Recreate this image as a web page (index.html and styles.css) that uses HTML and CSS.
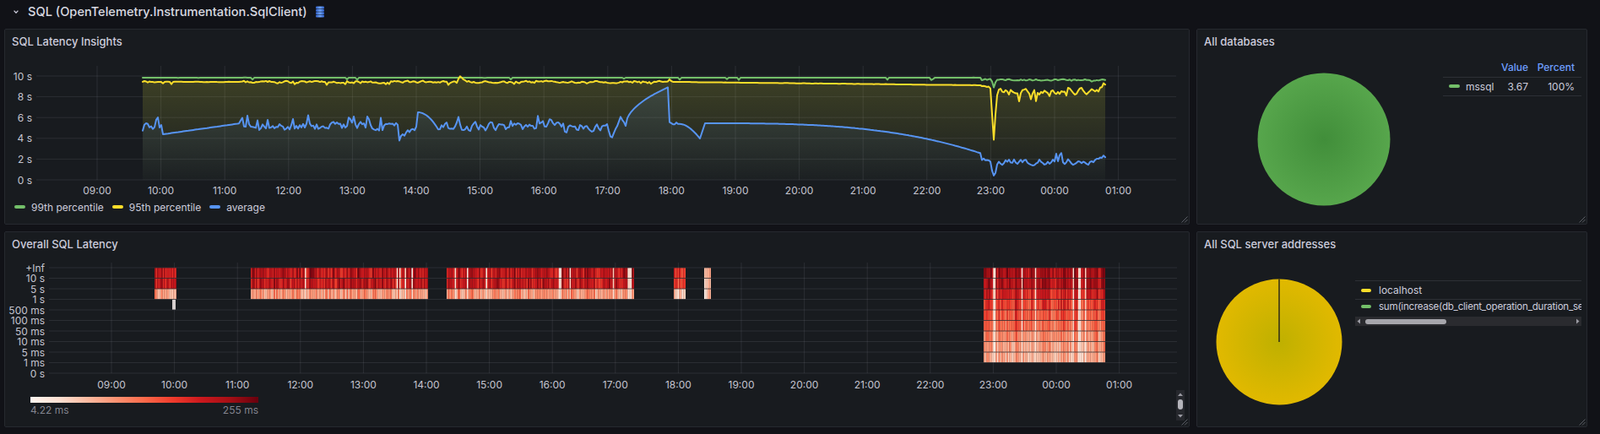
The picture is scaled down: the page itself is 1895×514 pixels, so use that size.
FILE: index.html
```html
<!DOCTYPE html>
<html lang="en">
<head>
<meta charset="utf-8">
<title>SQL (OpenTelemetry.Instrumentation.SqlClient)</title>
<link rel="stylesheet" href="styles.css">
</head>
<body>
<div class="row-header">
  <svg class="row-chevron" width="6" height="4" viewBox="0 0 6 4"><path d="M0.6 0.6 L3 3.2 L5.4 0.6"/></svg>
  <span class="row-title">SQL (OpenTelemetry.Instrumentation.SqlClient)</span>
  <svg class="row-icon" width="10" height="14" viewBox="0 0 10 14">
    <defs>
      <linearGradient id="dbg" x1="0" y1="0" x2="1" y2="0">
        <stop offset="0" stop-color="#2f5fc8"/>
        <stop offset="0.5" stop-color="#6ea3f7"/>
        <stop offset="1" stop-color="#2f5fc8"/>
      </linearGradient>
    </defs>
    <rect x="0" y="0.6" width="10" height="2.9" rx="1" fill="url(#dbg)"/>
    <rect x="0" y="3.9" width="10" height="2.9" rx="1" fill="url(#dbg)"/>
    <rect x="0" y="7.2" width="10" height="2.9" rx="1" fill="url(#dbg)"/>
    <rect x="0" y="10.5" width="10" height="2.9" rx="1" fill="url(#dbg)"/>
  </svg>
</div>

<main class="grid">
  <section class="panel">
    <header class="panel-header"><h2 class="panel-title">SQL Latency Insights</h2></header>
    <div class="panel-body">
      <svg id="latency" class="chart" width="1402" height="172" viewBox="6 63 1402 172">
        <defs>
          <linearGradient id="fill-green" gradientUnits="userSpaceOnUse" x1="0" y1="90" x2="0" y2="213">
            <stop offset="0" stop-color="#73bf69" stop-opacity="0.07"/>
            <stop offset="1" stop-color="#73bf69" stop-opacity="0.01"/>
          </linearGradient>
          <linearGradient id="fill-yellow" gradientUnits="userSpaceOnUse" x1="0" y1="90" x2="0" y2="213">
            <stop offset="0" stop-color="#fade2a" stop-opacity="0.14"/>
            <stop offset="1" stop-color="#fade2a" stop-opacity="0.01"/>
          </linearGradient>
          <linearGradient id="fill-blue" gradientUnits="userSpaceOnUse" x1="0" y1="90" x2="0" y2="213">
            <stop offset="0" stop-color="#5794f2" stop-opacity="0.14"/>
            <stop offset="1" stop-color="#5794f2" stop-opacity="0.01"/>
          </linearGradient>
        </defs>
        <path class="grid-line" d="M43 90H1393M43 114.6H1393M43 139.2H1393M43 163.8H1393M43 188.4H1393M43 213H1393M115 78V213M190.6 78V213M266.2 78V213M341.8 78V213M417.4 78V213M493 78V213M568.6 78V213M644.2 78V213M719.8 78V213M795.4 78V213M871 78V213M946.6 78V213M1022.2 78V213M1097.8 78V213M1173.4 78V213M1249 78V213M1324.6 78V213"/>
        <g id="latency-fills"></g>
        <g id="latency-lines"></g>
        <g class="axis-y">
          <text x="38" y="90">10 s</text>
          <text x="38" y="114.6">8 s</text>
          <text x="38" y="139.2">6 s</text>
          <text x="38" y="163.8">4 s</text>
          <text x="38" y="188.4">2 s</text>
          <text x="38" y="213">0 s</text>
        </g>
        <g class="axis-x">
          <text x="115" y="225">09:00</text>
          <text x="190.6" y="225">10:00</text>
          <text x="266.2" y="225">11:00</text>
          <text x="341.8" y="225">12:00</text>
          <text x="417.4" y="225">13:00</text>
          <text x="493" y="225">14:00</text>
          <text x="568.6" y="225">15:00</text>
          <text x="644.2" y="225">16:00</text>
          <text x="719.8" y="225">17:00</text>
          <text x="795.4" y="225">18:00</text>
          <text x="871" y="225">19:00</text>
          <text x="946.6" y="225">20:00</text>
          <text x="1022.2" y="225">21:00</text>
          <text x="1097.8" y="225">22:00</text>
          <text x="1173.4" y="225">23:00</text>
          <text x="1249" y="225">00:00</text>
          <text x="1324.6" y="225">01:00</text>
        </g>
      </svg>
      <div class="legend">
        <span class="legend-item"><span class="dash green"></span>99th percentile</span>
        <span class="legend-item"><span class="dash yellow"></span>95th percentile</span>
        <span class="legend-item"><span class="dash blue"></span>average</span>
      </div>
    </div>
    <svg class="resize" width="9" height="9" viewBox="0 0 9 9"><path d="M8.5 1.5L1.5 8.5M8.5 5L5 8.5"/></svg>
  </section>

  <section class="panel">
    <header class="panel-header"><h2 class="panel-title">All databases</h2></header>
    <div class="panel-body pie-body">
      <svg class="pie" width="291" height="202" viewBox="1418 63 291 202">
        <defs>
          <radialGradient id="pie-green" gradientUnits="userSpaceOnUse" cx="1568" cy="165" r="78.5">
            <stop offset="0" stop-color="#418e3a"/>
            <stop offset="1" stop-color="#57a64c"/>
          </radialGradient>
        </defs>
        <circle cx="1568" cy="165" r="78.5" fill="url(#pie-green)"/>
      </svg>
      <table class="pie-table">
        <colgroup><col class="c-name"><col class="c-val"><col class="c-pct"></colgroup>
        <thead>
          <tr><th></th><th class="num">Value</th><th class="num pct">Percent</th></tr>
        </thead>
        <tbody>
          <tr><td class="name"><span class="dash green"></span>mssql</td><td class="num">3.67</td><td class="num pct">100%</td></tr>
        </tbody>
      </table>
    </div>
    <svg class="resize" width="9" height="9" viewBox="0 0 9 9"><path d="M8.5 1.5L1.5 8.5M8.5 5L5 8.5"/></svg>
  </section>

  <section class="panel">
    <header class="panel-header"><h2 class="panel-title">Overall SQL Latency</h2></header>
    <div class="panel-body">
      <svg id="heatmap" class="chart" width="1402" height="159" viewBox="6 303 1402 159">
        <path class="grid-line" d="M58 317H1394M58 329.5H1394M58 342H1394M58 354.5H1394M58 367H1394M58 379.5H1394M58 392H1394M58 404.5H1394M58 417H1394M58 429.5H1394M58 442H1394M132 311V442M206.6 311V442M281.2 311V442M355.8 311V442M430.4 311V442M505 311V442M579.6 311V442M654.2 311V442M728.8 311V442M803.4 311V442M878 311V442M952.6 311V442M1027.2 311V442M1101.8 311V442M1176.4 311V442M1251 311V442M1325.6 311V442"/>
        <g id="heatmap-cells"></g>
        <g class="axis-y">
          <text x="53" y="317">+Inf</text>
          <text x="53" y="329.5">10 s</text>
          <text x="53" y="342">5 s</text>
          <text x="53" y="354.5">1 s</text>
          <text x="53" y="367">500 ms</text>
          <text x="53" y="379.5">100 ms</text>
          <text x="53" y="392">50 ms</text>
          <text x="53" y="404.5">10 ms</text>
          <text x="53" y="417">5 ms</text>
          <text x="53" y="429.5">1 ms</text>
          <text x="53" y="442">0 s</text>
        </g>
        <g class="axis-x">
          <text x="132" y="455">09:00</text>
          <text x="206.6" y="455">10:00</text>
          <text x="281.2" y="455">11:00</text>
          <text x="355.8" y="455">12:00</text>
          <text x="430.4" y="455">13:00</text>
          <text x="505" y="455">14:00</text>
          <text x="579.6" y="455">15:00</text>
          <text x="654.2" y="455">16:00</text>
          <text x="728.8" y="455">17:00</text>
          <text x="803.4" y="455">18:00</text>
          <text x="878" y="455">19:00</text>
          <text x="952.6" y="455">20:00</text>
          <text x="1027.2" y="455">21:00</text>
          <text x="1101.8" y="455">22:00</text>
          <text x="1176.4" y="455">23:00</text>
          <text x="1251" y="455">00:00</text>
          <text x="1325.6" y="455">01:00</text>
        </g>
      </svg>
      <div class="hm-legend">
        <div class="hm-bar"></div>
        <div class="hm-labels"><span>4.22 ms</span><span>255 ms</span></div>
      </div>
      <div class="vscroll">
        <svg width="10" height="36" viewBox="0 0 10 36">
          <path class="arrow" d="M2 7L5 3.5L8 7Z"/>
          <rect class="thumb" x="2" y="11" width="6" height="12" rx="3"/>
          <path class="arrow" d="M2 29L5 32.5L8 29Z"/>
        </svg>
      </div>
    </div>
    <svg class="resize" width="9" height="9" viewBox="0 0 9 9"><path d="M8.5 1.5L1.5 8.5M8.5 5L5 8.5"/></svg>
  </section>

  <section class="panel">
    <header class="panel-header"><h2 class="panel-title">All SQL server addresses</h2></header>
    <div class="panel-body pie-body">
      <svg class="pie" width="187" height="202" viewBox="1418 303 187 202">
        <defs>
          <radialGradient id="pie-yellow" gradientUnits="userSpaceOnUse" cx="1515" cy="405" r="74.5">
            <stop offset="0" stop-color="#bfb000"/>
            <stop offset="1" stop-color="#e1b900"/>
          </radialGradient>
        </defs>
        <circle cx="1515" cy="405" r="74.5" fill="url(#pie-yellow)"/>
        <path class="slice-line" d="M1515 330.5V405"/>
      </svg>
      <div class="addr-legend">
        <div class="addr-list">
          <div class="addr-row first"><span class="dash yellow"></span>localhost</div>
          <div class="addr-row"><span class="dash green"></span><span class="addr-name">sum(increase(db_client_operation_duration_seconds_count[$__range]))</span></div>
        </div>
        <div class="hscroll">
          <svg width="8" height="11" viewBox="0 0 8 11"><path class="arrow" d="M6 2.5L2.5 5.5L6 8.5Z"/></svg>
          <span class="hthumb"></span>
          <span class="hspacer"></span>
          <svg width="8" height="11" viewBox="0 0 8 11"><path class="arrow" d="M2 2.5L5.5 5.5L2 8.5Z"/></svg>
        </div>
      </div>
    </div>
    <svg class="resize" width="9" height="9" viewBox="0 0 9 9"><path d="M8.5 1.5L1.5 8.5M8.5 5L5 8.5"/></svg>
  </section>
</main>
<script src="script.js"></script>
</body>
</html>
```

FILE: styles.css
```css
* {
  box-sizing: border-box;
}

html, body {
  margin: 0;
  padding: 0;
}

body {
  width: 1895px;
  height: 514px;
  overflow: hidden;
  background: #111217;
  color: #ccccdc;
  font-family: Inter, "Noto Sans", "DejaVu Sans", sans-serif;
}

.row-header {
  height: 28px;
  display: flex;
  align-items: center;
  padding-left: 16px;
}

.row-chevron {
  margin-right: 11px;
  fill: none;
  stroke: #ccccdc;
  stroke-width: 1.3;
}

.row-title {
  font-size: 14.6px;
  font-weight: 500;
  color: #d8d9e0;
}

.row-icon {
  margin-left: 10px;
}

.grid {
  display: grid;
  grid-template-columns: 1404px 463px;
  grid-template-rows: 232px 232px;
  gap: 8px;
  margin: 6px 0 0 5px;
}

.panel {
  position: relative;
  display: flex;
  flex-direction: column;
  background: #181b1f;
  border: 1px solid #26292f;
  border-radius: 2px;
  overflow: hidden;
}

.panel-header {
  flex: none;
  height: 28px;
  display: flex;
  align-items: center;
  padding: 0 8px;
}

.panel-title {
  margin: 0;
  font-size: 13px;
  font-weight: 500;
  color: #ccccdc;
}

.panel-body {
  flex: 1;
  position: relative;
}

.chart {
  display: block;
}

.grid-line {
  fill: none;
  stroke: rgba(204, 204, 220, 0.11);
  stroke-width: 1;
}

.chart text {
  font-family: Inter, "Noto Sans", sans-serif;
  font-size: 12px;
  fill: #c4c4cf;
  dominant-baseline: central;
}

.axis-y text {
  text-anchor: end;
}

.axis-x text {
  text-anchor: middle;
}

.series {
  fill: none;
  stroke-width: 2;
  stroke-linejoin: round;
  stroke-linecap: round;
}

.legend {
  height: 20px;
  display: flex;
  align-items: center;
  gap: 10px;
  padding-left: 11px;
  font-size: 12px;
}

.legend-item {
  display: flex;
  align-items: center;
}

.dash {
  display: inline-block;
  flex: none;
  width: 13px;
  height: 4px;
  border-radius: 2px;
  margin-right: 7px;
}

.dash.green { background: #73bf69; }
.dash.yellow { background: #fade2a; }
.dash.blue { background: #5794f2; }

.resize {
  position: absolute;
  right: 1px;
  bottom: 1px;
  fill: none;
  stroke: #5b5e66;
  stroke-width: 1;
}

/* pie panels */
.pie-body {
  display: flex;
  align-items: flex-start;
}

.pie {
  display: block;
  flex: none;
}

.slice-line {
  stroke: #14161a;
  stroke-width: 1.3;
}

.pie-table {
  margin-top: 6px;
  width: 164px;
  border-collapse: collapse;
  table-layout: fixed;
  font-size: 12px;
}

.c-name { width: 61px; }
.c-val { width: 40px; }
.c-pct { width: 63px; }

.pie-table th {
  height: 22px;
  padding: 0;
  color: #6e9fff;
  font-weight: 500;
  border-bottom: 1px solid #2d3036;
}

.pie-table td {
  height: 22px;
  padding: 0;
  color: #ccccdc;
  border-bottom: 1px solid #2d3036;
}

.pie-table .num {
  text-align: right;
}

.pie-table .pct {
  padding-right: 8px;
}

.pie-table td.name {
  padding-left: 7px;
  white-space: nowrap;
}

.pie-table td.name .dash {
  vertical-align: middle;
  position: relative;
  top: -1px;
}

.addr-legend {
  width: 268px;
  margin-top: 29px;
}

.addr-list {
  overflow: hidden;
  border-top: 1px solid #2d3036;
}

.addr-row {
  display: flex;
  align-items: center;
  height: 16px;
  padding-left: 7px;
  font-size: 12px;
  white-space: nowrap;
}

.addr-name {
  font-size: 11.6px;
  letter-spacing: -0.25px;
}

.addr-row.first {
  height: 22px;
  border-bottom: 1px solid #2d3036;
}

.addr-row .dash {
  width: 12px;
  margin-right: 9px;
}

.hscroll {
  margin-top: 4px;
  height: 11px;
  display: flex;
  align-items: center;
  background: #2a2b2f;
}

.hscroll svg {
  display: block;
  flex: none;
}

.arrow {
  fill: #9a9aa2;
}

.hthumb {
  flex: none;
  width: 96px;
  height: 6px;
  margin-left: 4px;
  border-radius: 3px;
  background: #a6a6ac;
}

.hspacer {
  flex: 1;
}

/* heatmap */
.hm-legend {
  width: 270px;
  margin: 8px 0 0 30px;
}

.hm-bar {
  height: 7px;
  background: linear-gradient(to right, #fff5f0, #fee0d2, #fcbba1, #fc9272, #fb6a4a, #ef3b2c, #cb181d, #a50f15, #67000d);
}

.hm-labels {
  display: flex;
  justify-content: space-between;
  margin-top: 2px;
  font-size: 12px;
  line-height: 14px;
  color: rgba(204, 204, 220, 0.6);
}

.vscroll {
  position: absolute;
  right: 5px;
  top: 159px;
  width: 10px;
  height: 36px;
  background: #26282d;
}

.vscroll svg {
  display: block;
}

.thumb {
  fill: #b4b4ba;
}
```

FILE: script.js
```js
(function () {
  var NS = 'http://www.w3.org/2000/svg';
  var seed = 7919;
  function rnd() { seed = (seed * 1664525 + 1013904223) >>> 0; return seed / 4294967296; }
  function gauss(x, c, w) { var d = (x - c) / w; return Math.exp(-d * d); }
  function seg(x, x0, x1, y0, y1) { return y0 + (y1 - y0) * (x - x0) / (x1 - x0); }
  function el(name, attrs, parent) {
    var e = document.createElementNS(NS, name);
    for (var k in attrs) e.setAttribute(k, attrs[k]);
    parent.appendChild(e);
    return e;
  }

  function series(base, amp, prob, spike, extra) {
    var pts = [], n = 0;
    for (var x = 169; x <= 1309; x += 2) {
      n = 0.5 * n + (rnd() * 2 - 1);
      var a = amp(x), y = base(x) + n * a;
      if (rnd() < prob(x)) y += spike(x) * (0.6 + rnd() * 0.8);
      y += extra(x);
      pts.push([x, y]);
    }
    return pts;
  }

  var green = series(
    function (x) { return x < 1163 ? 92 : 94.5; },
    function (x) { return x < 1163 ? 0.1 : 0.9; },
    function (x) { return x < 1163 ? 0.02 : 0.06; },
    function () { return 2; },
    function (x) { return gauss(x, 1177, 1.8) * 9; }
  );

  var yellow = series(
    function (x) {
      if (x < 800) return 97;
      if (x < 1163) return seg(x, 800, 1163, 97, 101);
      if (x < 1175) return 102;
      if (x < 1298) return 108;
      return seg(x, 1298, 1309, 108, 100);
    },
    function (x) {
      if (x < 193) return 1;
      if (x < 285) return 0.2;
      if (x < 720) return 1.1;
      if (x < 792) return 0.9;
      if (x < 1163) return 0.1;
      if (x < 1175) return 1;
      return 3.2;
    },
    function (x) { return x > 1180 ? 0.12 : (x < 792 ? 0.08 : 0); },
    function (x) { return x > 1180 ? 8 : 2; },
    function (x) { return -6 * gauss(x, 545, 4) - 3 * gauss(x, 793, 2) + 58 * gauss(x, 1177, 2.2); }
  );

  var blue = series(
    function (x) {
      if (x < 193) return 150;
      if (x < 285) return seg(x, 193, 285, 159, 146);
      if (x < 473) return 150;
      if (x < 495) return seg(x, 473, 495, 161, 150);
      if (x < 520) return 133 + 22 * Math.pow((x - 495) / 25, 2);
      if (x < 720) return 150;
      if (x < 724) return seg(x, 720, 724, 152, 166);
      if (x < 735) return seg(x, 724, 735, 166, 139);
      if (x < 741) return seg(x, 735, 741, 139, 149);
      if (x < 792) return 149 - 46 * Math.sqrt((x - 741) / 51);
      if (x < 807) return 145;
      if (x < 829) return 147 + 17 * Math.pow((x - 807) / 22, 1.6);
      if (x < 835) return seg(x, 829, 835, 164, 146);
      if (x < 1163) return 146 + 36 * Math.pow((x - 835) / 328, 3);
      if (x < 1300) return 191;
      return seg(x, 1300, 1309, 191, 187);
    },
    function (x) {
      if (x < 193) return 5;
      if (x < 285) return 0;
      if (x < 473) return 4.2;
      if (x < 495) return 3;
      if (x < 520) return 0;
      if (x < 720) return 4.2;
      if (x < 741) return 1;
      if (x < 792) return 0;
      if (x < 807) return 2;
      if (x < 1163) return 0;
      return 3;
    },
    function (x) {
      if ((x >= 285 && x < 473) || (x >= 520 && x < 720) || x < 193) return 0.08;
      if (x >= 1165 && x < 1300) return 0.06;
      return 0;
    },
    function () { return -8; },
    function (x) {
      return 10 * gauss(x, 473, 2) - 16 * gauss(x, 543, 2.5) + 18 * gauss(x, 1177, 3)
        - 10 * gauss(x, 174, 1.5) - 12 * gauss(x, 187, 2);
    }
  );

  function pathOf(pts) {
    return 'M' + pts.map(function (p) { return p[0] + ' ' + p[1].toFixed(1); }).join('L');
  }

  var fills = document.getElementById('latency-fills');
  var lines = document.getElementById('latency-lines');
  [[green, 'green'], [yellow, 'yellow'], [blue, 'blue']].forEach(function (s) {
    el('path', { d: pathOf(s[0]) + 'L1309 213L169 213Z', fill: 'url(#fill-' + s[1] + ')' }, fills);
  });
  [[green, '#73bf69'], [yellow, '#fade2a'], [blue, '#5794f2']].forEach(function (s) {
    el('path', { d: pathOf(s[0]), stroke: s[1], 'class': 'series' }, lines);
  });

  /* heatmap */
  var stops = ['#fff5f0', '#fee0d2', '#fcbba1', '#fc9272', '#fb6a4a', '#ef3b2c', '#cb181d', '#a50f15', '#67000d'].map(function (h) {
    return [parseInt(h.substr(1, 2), 16), parseInt(h.substr(3, 2), 16), parseInt(h.substr(5, 2), 16)];
  });
  function reds(t) {
    t = Math.max(0, Math.min(1, t));
    var p = t * (stops.length - 1), i = Math.min(Math.floor(p), stops.length - 2), f = p - i;
    var a = stops[i], b = stops[i + 1];
    return 'rgb(' + Math.round(a[0] + (b[0] - a[0]) * f) + ',' + Math.round(a[1] + (b[1] - a[1]) * f) + ',' + Math.round(a[2] + (b[2] - a[2]) * f) + ')';
  }

  var cells = document.getElementById('heatmap-cells');
  var segs = [
    { x0: 183, x1: 209, rows: [0.78, 0.76, 0.36] },
    { x0: 297, x1: 507, rows: [0.8, 0.78, 0.36] },
    { x0: 529, x1: 751, rows: [0.8, 0.78, 0.36] },
    { x0: 798, x1: 812, rows: [0.62, 0.6, 0.2] },
    { x0: 834, x1: 842, rows: [0.26, 0.24, 0.2] },
    { x0: 1165, x1: 1309, rows: [0.85, 0.82, 0.72, 0.62, 0.55, 0.48, 0.4, 0.33, 0.28], forceLight: [1177, 1278] }
  ];
  segs.forEach(function (s) {
    for (var x = s.x0; x < s.x1; x += 1.6) {
      var light = rnd() < 0.05;
      if (s.forceLight) {
        s.forceLight.forEach(function (c) { if (Math.abs(x - c) < 1.2) light = true; });
      }
      var shared = (rnd() - 0.5) * 0.22;
      var w = Math.min(1.8, s.x1 - x);
      for (var r = 0; r < s.rows.length; r++) {
        var t = s.rows[r] + shared + (rnd() - 0.5) * 0.18;
        if (light) t = Math.min(t, 0.05 + rnd() * 0.15);
        el('rect', {
          x: x.toFixed(2), y: (317 + 12.5 * r + 0.4).toFixed(1),
          width: w.toFixed(2), height: '11.7', fill: reds(t)
        }, cells);
      }
    }
  });
  el('rect', { x: '204', y: '354.9', width: '4', height: '11.7', fill: '#d6cfce' }, cells);
})();
```
